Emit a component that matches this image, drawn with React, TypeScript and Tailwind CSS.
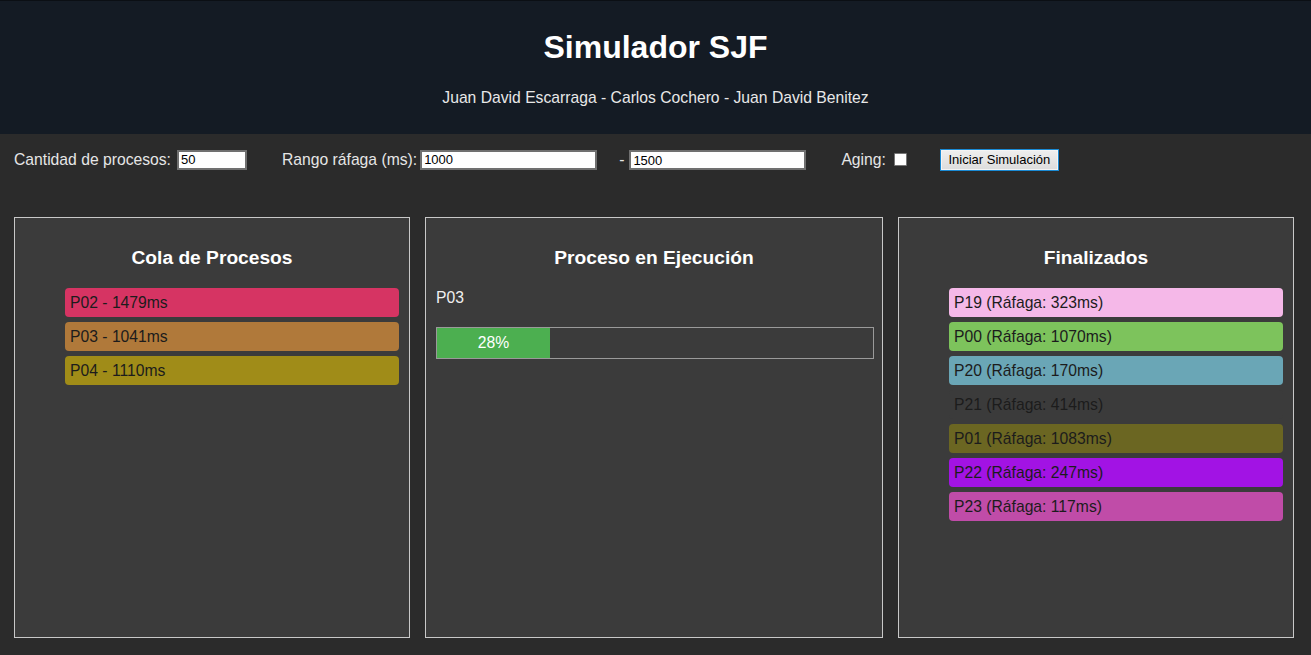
import React from 'react';

const QUEUE = [
  { id: 'P02', burst: 1479, bg: 'bg-[#d63463]' },
  { id: 'P03', burst: 1041, bg: 'bg-[#b0793a]' },
  { id: 'P04', burst: 1110, bg: 'bg-[#a08c18]' },
];

const DONE = [
  { id: 'P19', burst: 323, bg: 'bg-[#f5b8e8]' },
  { id: 'P00', burst: 1070, bg: 'bg-[#7dc35c]' },
  { id: 'P20', burst: 170, bg: 'bg-[#6aa6b6]' },
  { id: 'P21', burst: 414, bg: 'bg-[#3b3b3b]' },
  { id: 'P01', burst: 1083, bg: 'bg-[#6b6622]' },
  { id: 'P22', burst: 247, bg: 'bg-[#a213e4]' },
  { id: 'P23', burst: 117, bg: 'bg-[#c04ca8]' },
];

const progress = 28;

export default function App() {
  return (
    <div className="min-h-[655px] bg-[#2b2b2b] font-['Liberation_Sans',Arial,sans-serif] text-[#e6e6e6]">
      <header className="bg-[#141b24] border-t border-[#0b0f14] h-[134px] flex flex-col items-center">
        <h1 className="mt-[28px] text-[32px] leading-[37px] font-bold text-white">Simulador SJF</h1>
        <p className="mt-[23px] text-[15.7px] leading-[18px] text-[#e8e8e8]">
          Juan David Escarraga - Carlos Cochero - Juan David Benitez
        </p>
      </header>

      <div className="flex items-center h-[52px] pl-[14px] text-[15.7px]">
        <label className="flex items-center">
          Cantidad de procesos:
          <input defaultValue="50" className="ml-[6px] w-[70px] h-[20px] bg-white text-black text-[13px] px-[2px] border-2 border-[#707070] outline-none" />
        </label>
        <label className="flex items-center ml-[35px]">
          Rango ráfaga (ms):
          <input defaultValue="1000" className="ml-[3px] w-[177px] h-[20px] bg-white text-black text-[13px] px-[2px] border-2 border-[#707070] outline-none" />
        </label>
        <span className="ml-[22px]">-</span>
        <input defaultValue="1500" className="ml-[5px] w-[177px] h-[20px] bg-white text-black text-[13px] px-[2px] border-2 border-[#707070] outline-none" />
        <label className="flex items-center ml-[35px]">
          Aging:
          <span className="ml-[8px] w-[13px] h-[13px] bg-white border border-[#767676] rounded-[1px]" />
        </label>
        <button className="ml-[33px] w-[119px] h-[22px] bg-gradient-to-b from-[#efefef] to-[#dcdcdc] border border-[#1a8ad4] shadow-[inset_0_0_0_1px_#f4f4f4] text-black text-[13px] font-['Liberation_Sans',Arial,sans-serif]">
          Iniciar Simulación
        </button>
      </div>

      <main className="flex gap-[15px] px-[14px] pt-[31px]">
        <section className="w-[396px] h-[421px] bg-[#3b3b3b] border border-[#c8c8c8] p-[10px]">
          <h2 className="mt-[19px] text-center text-[19.2px] leading-[22px] font-bold text-white">Cola de Procesos</h2>
          <ul className="mt-[19px] pl-[40px] flex flex-col gap-[5px]">
            {QUEUE.map((p) => (
              <li key={p.id} className={`${p.bg} h-[29px] rounded-[4px] px-[5px] flex items-center text-[15.7px] text-[#1c1c1c]`}>
                {p.id} - {p.burst}ms
              </li>
            ))}
          </ul>
        </section>

        <section className="w-[458px] h-[421px] bg-[#3b3b3b] border border-[#c8c8c8] p-[10px]">
          <h2 className="mt-[19px] text-center text-[19.2px] leading-[22px] font-bold text-white">Proceso en Ejecución</h2>
          <p className="mt-[20px] text-[15.7px] leading-[18px] text-[#f0f0f0]">P03</p>
          <div className="mt-[20px] w-[438px] h-[32px] border border-[#9a9a9a] bg-[#3b3b3b]">
            <div className="h-full w-[113px] bg-[#4caf50] flex items-center justify-center text-[15.7px] text-white">
              {progress}%
            </div>
          </div>
        </section>

        <section className="w-[396px] h-[421px] bg-[#3b3b3b] border border-[#c8c8c8] p-[10px]">
          <h2 className="mt-[19px] text-center text-[19.2px] leading-[22px] font-bold text-white">Finalizados</h2>
          <ul className="mt-[19px] pl-[40px] flex flex-col gap-[5px]">
            {DONE.map((p) => (
              <li key={p.id} className={`${p.bg} h-[29px] rounded-[4px] px-[5px] flex items-center text-[15.7px] text-[#1c1c1c]`}>
                {p.id} (Ráfaga: {p.burst}ms)
              </li>
            ))}
          </ul>
        </section>
      </main>
    </div>
  );
}
